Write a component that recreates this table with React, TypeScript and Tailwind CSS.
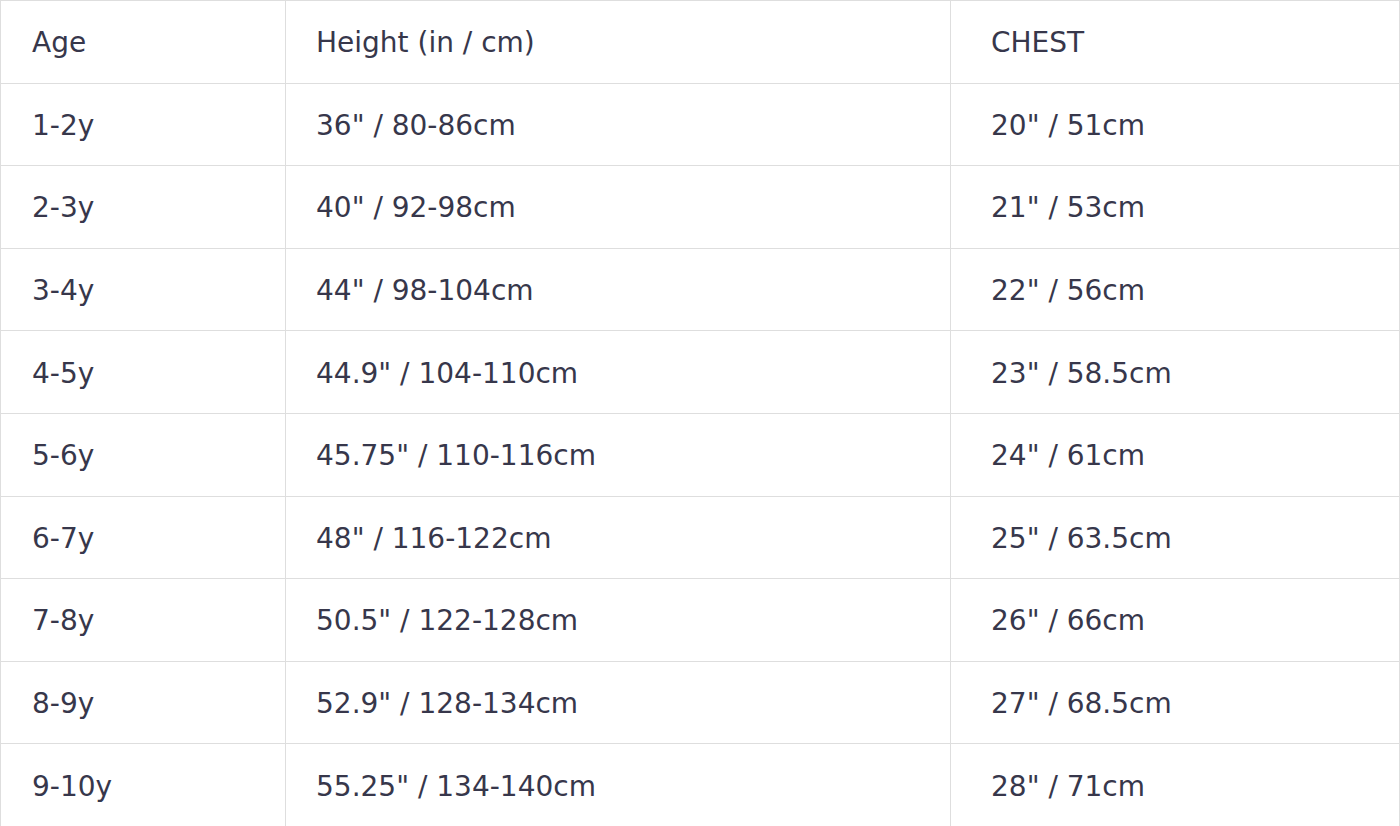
const rows: [string, string, string][] = [
  ["1-2y", '36" / 80-86cm', '20" / 51cm'],
  ["2-3y", '40" / 92-98cm', '21" / 53cm'],
  ["3-4y", '44" / 98-104cm', '22" / 56cm'],
  ["4-5y", '44.9" / 104-110cm', '23" / 58.5cm'],
  ["5-6y", '45.75" / 110-116cm', '24" / 61cm'],
  ["6-7y", '48" / 116-122cm', '25" / 63.5cm'],
  ["7-8y", '50.5" / 122-128cm', '26" / 66cm'],
  ["8-9y", '52.9" / 128-134cm', '27" / 68.5cm'],
  ["9-10y", '55.25" / 134-140cm', '28" / 71cm'],
];

function Cell({ children, pad }: { children: React.ReactNode; pad: string }) {
  return (
    <td className={`border border-[#dedede] align-middle whitespace-nowrap pt-[3px] ${pad}`}>
      {children}
    </td>
  );
}

export default function App() {
  return (
    <div className="bg-white w-[1400px] h-[826px] overflow-hidden">
      <table
        className="table-fixed border-collapse w-[1399px] text-[28px] text-[#37374b]"
        style={{ fontFamily: '"DejaVu Sans", sans-serif' }}
      >
        <colgroup>
          <col className="w-[285px]" />
          <col className="w-[665px]" />
          <col className="w-[449px]" />
        </colgroup>
        <tbody>
          <tr className="h-[82.6px]">
            <Cell pad="pl-[31px]">Age</Cell>
            <Cell pad="pl-[30px]">Height (in / cm)</Cell>
            <Cell pad="pl-[40px]">CHEST</Cell>
          </tr>
          {rows.map(([age, height, chest]) => (
            <tr key={age} className="h-[82.6px]">
              <Cell pad="pl-[31px]">{age}</Cell>
              <Cell pad="pl-[30px]">{height}</Cell>
              <Cell pad="pl-[40px]">{chest}</Cell>
            </tr>
          ))}
        </tbody>
      </table>
    </div>
  );
}
